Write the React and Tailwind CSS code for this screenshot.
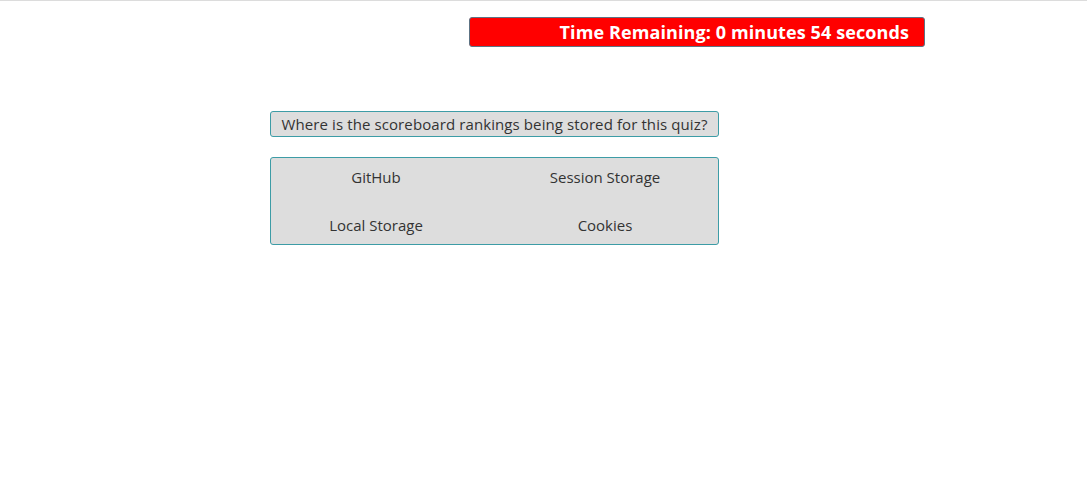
import React from 'react';

const answers = ['GitHub', 'Session Storage', 'Local Storage', 'Cookies'];

export default function App() {
  return (
    <div
      className="min-h-[489px] bg-white border-t border-[#dcdcdc] text-[#333]"
      style={{ fontFamily: '"Open Sans", "Noto Sans", sans-serif' }}
    >
      <div className="pl-[270px] pt-[16px]">
        {/* Timer */}
        <div className="ml-[199px] w-[456px] h-[30px] flex items-center justify-end pr-[15px] bg-[#ff0000] border border-[#5d7384] rounded-[3px]">
          <span className="text-white font-bold text-[18px] leading-none tracking-[0.1px]">
            Time Remaining: 0 minutes 54 seconds
          </span>
        </div>

        {/* Question */}
        <div className="mt-[64px] w-[449px] h-[26px] flex items-center justify-center bg-[#dddddd] border border-[#3d9ca6] rounded-[3px]">
          <span className="text-[15px] leading-none tracking-[0.1px]">
            Where is the scoreboard rankings being stored for this quiz?
          </span>
        </div>

        {/* Answers */}
        <div className="mt-[20px] w-[449px] h-[88px] pt-[7px] bg-[#dddddd] border border-[#3d9ca6] rounded-[3px] grid grid-cols-[210px_226px] gap-x-[11px] gap-y-[24px] content-start">
          {answers.map((a) => (
            <div key={a} className="h-[24px] flex items-center justify-center text-[15px] cursor-pointer">
              {a}
            </div>
          ))}
        </div>
      </div>
    </div>
  );
}
